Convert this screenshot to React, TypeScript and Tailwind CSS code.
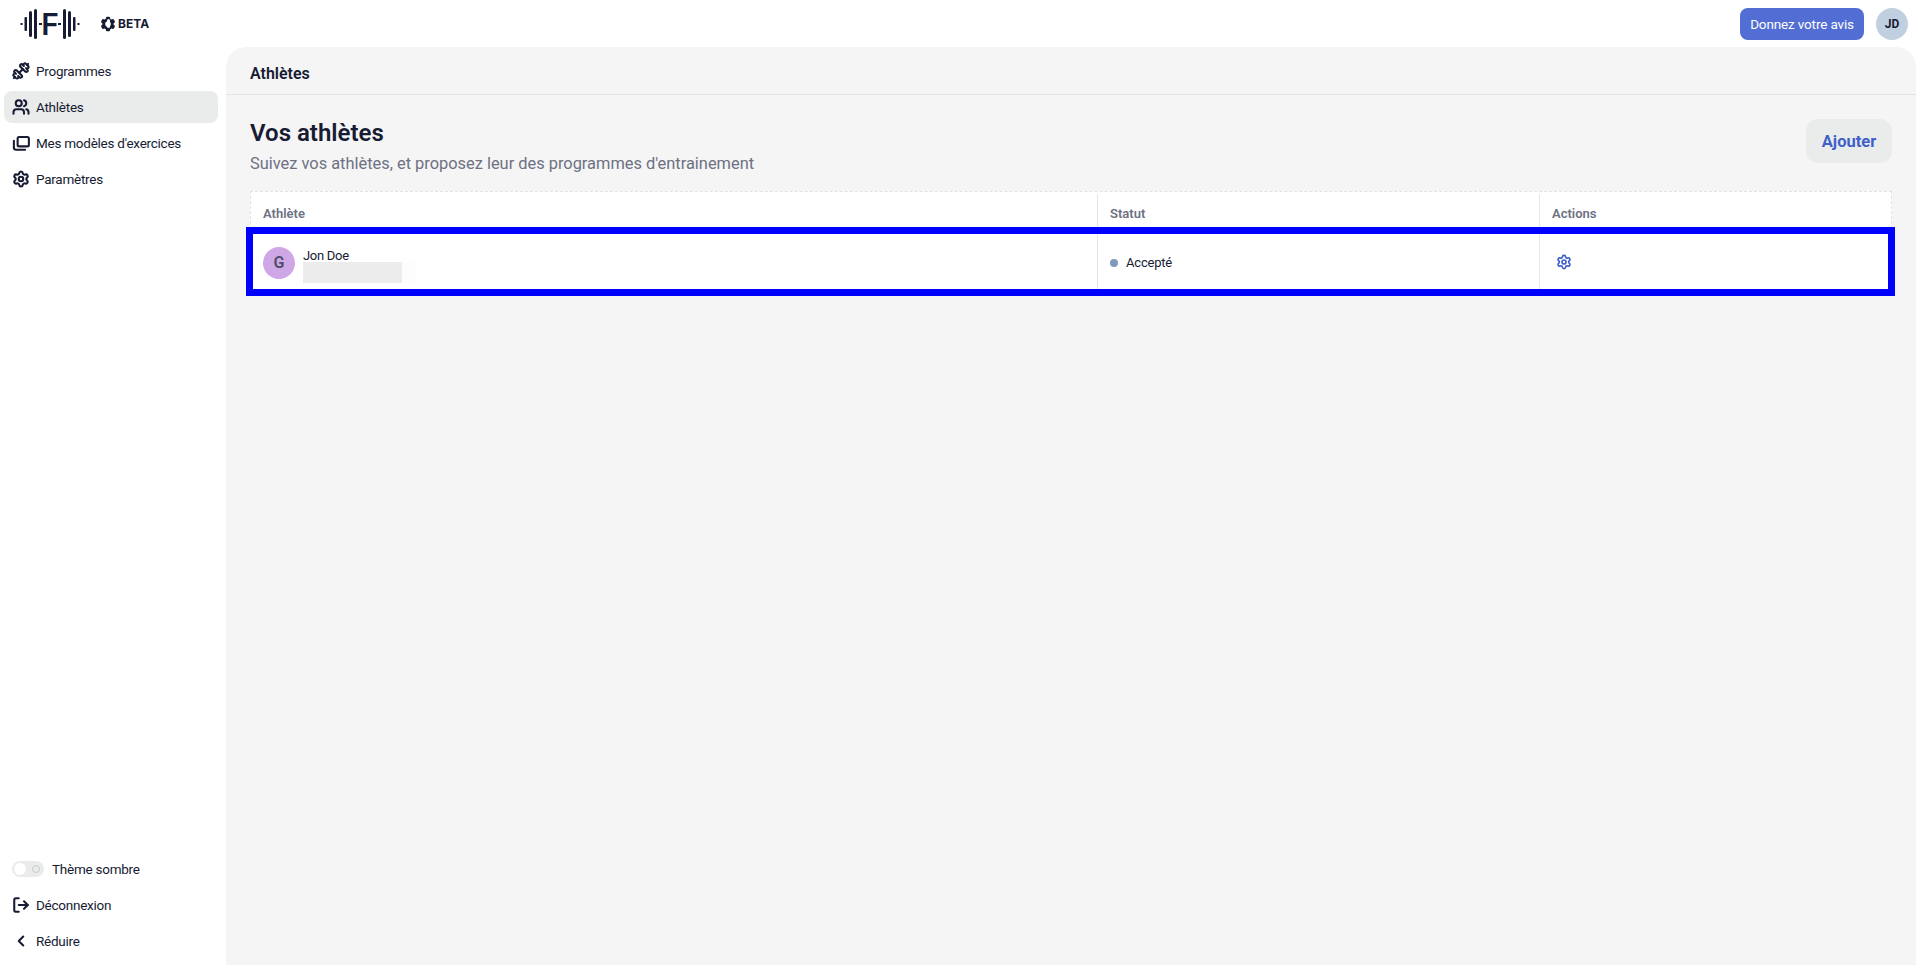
import { ChevronLeft, Dumbbell, LogOut, Settings, Users } from 'lucide-react';
import { HiCog6Tooth } from 'react-icons/hi2';

function ModelsIcon({ className }: { className?: string }) {
  return (
    <svg viewBox="0 0 24 24" fill="none" stroke="currentColor" strokeWidth={2.75} strokeLinecap="round" strokeLinejoin="round" className={className}>
      <rect x="7.5" y="4" width="15" height="12.5" rx="2" />
      <path d="M2.5 9v9a3 3 0 0 0 3 3h12" />
    </svg>
  );
}

const navItems = [
  { label: 'Programmes', icon: Dumbbell },
  { label: 'Athlètes', icon: Users, active: true },
  { label: "Mes modèles d'exercices", icon: ModelsIcon },
  { label: 'Paramètres', icon: Settings },
];

function Logo() {
  return (
    <div className="flex items-center gap-[19px] pl-[20px]">
      <svg width="60" height="32" viewBox="0 0 60 32" className="overflow-visible text-[#171b33]">
        <g fill="currentColor">
          <rect x="0.5" y="15" width="2" height="2" />
          <rect x="4.5" y="9" width="2.5" height="14" rx="1" />
          <rect x="9" y="3" width="3" height="26" rx="1.5" />
          <rect x="14" y="1" width="3" height="30" rx="1.5" />
          <rect x="19" y="15" width="3" height="2" />
          <rect x="38" y="15" width="3" height="2" />
          <rect x="43" y="1" width="3" height="30" rx="1.5" />
          <rect x="48" y="3" width="3" height="26" rx="1.5" />
          <rect x="53" y="9" width="2.5" height="14" rx="1" />
          <rect x="57.5" y="15" width="2" height="2" />
          <text x="30" y="27" textAnchor="middle" fontSize="30" fontWeight="600" fontFamily="Inter, sans-serif">
            F
          </text>
        </g>
      </svg>
      <div className="flex items-center gap-[1px] text-[#171b33]">
        <div className="relative flex h-[18px] w-[18px] items-center justify-center">
          <HiCog6Tooth className="h-[18px] w-[18px]" />
          <span className="absolute h-[9px] w-[3px] rounded-full bg-white" />
        </div>
        <span className="font-['Inter',sans-serif] text-[12px] font-bold">BETA</span>
      </div>
    </div>
  );
}

function SideRow({ icon: Icon, label, active }: { icon: any; label: string; active?: boolean }) {
  return (
    <div className={`flex h-[32px] items-center gap-[6px] rounded-[8px] px-[8px] text-[13.5px] tracking-[-0.25px] text-[#171b33] ${active ? 'bg-[#eaecec]' : ''}`}>
      <Icon className="h-[18px] w-[18px] shrink-0" strokeWidth={2.75} />
      <span>{label}</span>
    </div>
  );
}

export default function App() {
  return (
    <div className="flex h-[965px] w-full flex-col overflow-hidden bg-white font-['Roboto',sans-serif] text-[#171b33]">
      <header className="flex h-[47px] shrink-0 items-center justify-between pr-[8px]">
        <Logo />
        <div className="flex items-center gap-[12px]">
          <button className="flex h-[32px] w-[124px] items-center justify-center rounded-[8px] bg-[#526dd3] pt-[1px] text-[13.5px] tracking-[-0.15px] text-white">
            Donnez votre avis
          </button>
          <div className="flex h-[32px] w-[32px] items-center justify-center rounded-full bg-[#c0d0e0] text-[12px] font-bold">
            JD
          </div>
        </div>
      </header>

      <div className="flex min-h-0 flex-1">
        <aside className="flex w-[226px] shrink-0 flex-col justify-between pb-[8px] pl-[4px] pr-[8px] pt-[8px]">
          <nav className="flex flex-col gap-[4px]">
            {navItems.map((item) => (
              <SideRow key={item.label} icon={item.icon} label={item.label} active={item.active} />
            ))}
          </nav>
          <div className="flex flex-col gap-[4px]">
            <div className="flex h-[32px] items-center gap-[8px] px-[8px] text-[13.5px] tracking-[-0.25px]">
              <div className="flex h-[16px] w-[32px] items-center justify-between rounded-full bg-[#eaecec] pl-[2px] pr-[4px]">
                <span className="h-[12px] w-[12px] rounded-full bg-white" />
                <span className="h-[8px] w-[8px] rounded-full border border-[#c5cad0]" />
              </div>
              <span>Thème sombre</span>
            </div>
            <SideRow icon={LogOut} label="Déconnexion" />
            <SideRow icon={ChevronLeft} label="Réduire" />
          </div>
        </aside>

        <main className="min-w-0 flex-1 rounded-t-[20px] bg-[#f5f5f5]">
          <div className="flex h-[48px] items-center border-b border-[#e2e2e2] px-[24px] pt-[7px] text-[16px] font-semibold">
            Athlètes
          </div>
          <div className="px-[24px] pt-[24px]">
            <div className="flex items-start justify-between">
              <div>
                <h1 className="text-[24px] font-semibold leading-[28px]">Vos athlètes</h1>
                <p className="mt-[4px] text-[16.4px] leading-[26px] text-[#6d7183]">
                  Suivez vos athlètes, et proposez leur des programmes d'entrainement
                </p>
              </div>
              <button className="h-[44px] w-[86px] rounded-[12px] bg-[#eaecec] pt-[2px] text-[16.5px] font-bold text-[#4060c8]">
                Ajouter
              </button>
            </div>

            <div className="mt-[14px] border border-dashed border-[#e2e2e2] bg-white">
              <div className="grid h-[42px] grid-cols-[846px_442px_1fr] pt-[2px] text-[13px] font-semibold text-[#6d7183]">
                <div className="flex items-center px-[12px]">Athlète</div>
                <div className="flex items-center border-l border-[#e6e6e6] px-[12px]">Statut</div>
                <div className="flex items-center border-l border-[#e6e6e6] px-[12px]">Actions</div>
              </div>
              <div className="ml-[2px] mr-[3px] grid h-[55px] grid-cols-[844px_442px_1fr] outline-[7px] outline-[#0000ff]">
                <div className="flex items-center gap-[8px] pl-[10px] pt-[3px]">
                  <div className="flex h-[32px] w-[32px] items-center justify-center rounded-full bg-[#cfa6e6] text-[16px] font-semibold text-[#4b4f66]">
                    G
                  </div>
                  <div className="mt-[4px] text-[13px] leading-[16px] tracking-[-0.3px]">
                    <div>Jon Doe</div>
                    <div className="-mt-[2px] flex h-[21px] w-[113px]">
                      <div className="w-[99px] bg-[#ececec]" />
                      <div className="flex-1 bg-[#fdfdfd]" />
                    </div>
                  </div>
                </div>
                <div className="flex items-center gap-[8px] border-l border-[#e6e6e6] px-[12px] pt-[3px] text-[13px] tracking-[-0.2px]">
                  <span className="h-[8px] w-[8px] rounded-full bg-[#7f98bd]" />
                  Accepté
                </div>
                <div className="flex items-center border-l border-[#e6e6e6] px-[16px] pt-[1px]">
                  <Settings className="h-[16px] w-[16px] text-[#4060c8]" strokeWidth={2.5} />
                </div>
              </div>
            </div>
          </div>
        </main>
      </div>
    </div>
  );
}
